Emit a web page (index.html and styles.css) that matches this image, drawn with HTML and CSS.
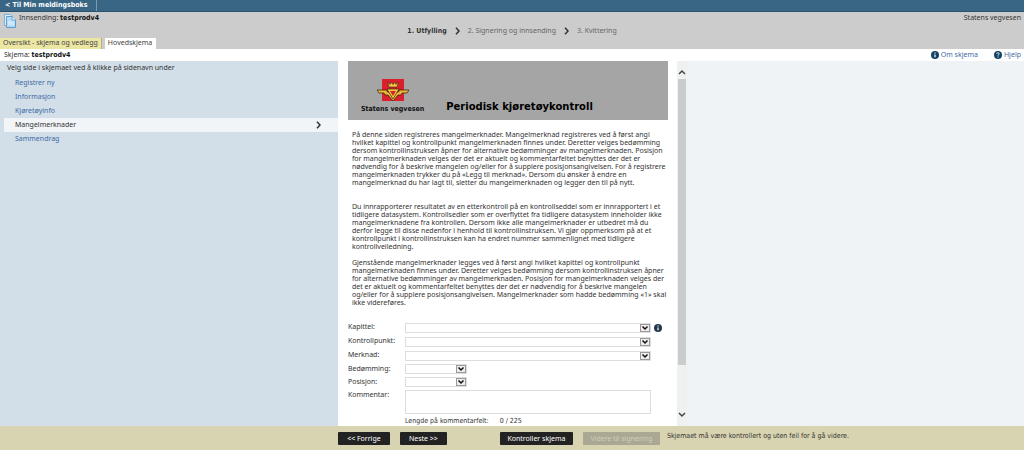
FILE: index.html
```html
<!DOCTYPE html>
<html lang="no">
<head>
<meta charset="utf-8">
<title>Periodisk kjøretøykontroll</title>
<link rel="stylesheet" href="styles.css">
</head>
<body>
<nav class="topbar"><a class="topbar-link" href="#">&lt; Til Min meldingsboks</a></nav>

<header class="header">
  <div class="header-left">
    <div class="submission">
      <svg class="doc-icon" viewBox="0 0 12 14" aria-hidden="true">
        <path d="M.5.5h6l3 3v8h-9z" fill="#dff0fb" stroke="#7fb0d6"/>
        <path d="M2.500 2.500h5.500l3.500 3.500v7.500h-9z" fill="#b5dbf5" stroke="#5f9ccb"/>
        <path d="M8 2.500v3.500h3.500" fill="#fff" stroke="#5f9ccb"/>
        <path d="M4 8h6M4 10h6" stroke="#e8f5fd"/>
      </svg>
      <span>Innsending: <strong>testprodv4</strong></span>
    </div>
    <div class="tabs">
      <a class="tab" href="#">Oversikt - skjema og vedlegg</a>
      <a class="tab tab-active" href="#">Hovedskjema</a>
    </div>
  </div>
  <ol class="steps">
    <li class="step-current">1. Utfylling</li>
    <li><svg class="chevron" viewBox="0 0 5 8" aria-hidden="true"><path d="M1 .7 4 4 1 7.300"/></svg>2. Signering og innsending</li>
    <li><svg class="chevron" viewBox="0 0 5 8" aria-hidden="true"><path d="M1 .7 4 4 1 7.300"/></svg>3. Kvittering</li>
  </ol>
  <div class="owner">Statens vegvesen</div>
</header>

<div class="formbar">
  <span>Skjema: <strong>testprodv4</strong></span>
  <div class="help-links">
    <a class="help-link" href="#"><svg class="round-icon" viewBox="0 0 8 8" aria-hidden="true"><circle cx="4" cy="4" r="4" fill="#134364"/><path d="M4 3.400v2.800M4 1.500v1" stroke="#fff" stroke-width="1.200"/></svg>Om skjema</a>
    <a class="help-link" href="#"><svg class="round-icon" viewBox="0 0 8 8" aria-hidden="true"><circle cx="4" cy="4" r="4" fill="#134364"/><path d="M2.700 3c0-1.800 2.700-1.600 2.500 0-.1.800-1.200.8-1.200 1.700M4 5.500v1" fill="none" stroke="#fff" stroke-width=".9"/></svg>Hjelp</a>
  </div>
</div>

<div class="workspace">
  <aside class="sidebar">
    <p class="sidebar-hint">Velg side i skjemaet ved å klikke på sidenavn under</p>
    <ul class="pages">
      <li><a class="page" href="#">Registrer ny</a></li>
      <li><a class="page" href="#">Informasjon</a></li>
      <li><a class="page" href="#">Kjøretøyinfo</a></li>
      <li><a class="page page-active" href="#">Mangelmerknader<svg class="chevron" viewBox="0 0 5 8" aria-hidden="true"><path d="M1 .7 4 4 1 7.300"/></svg></a></li>
      <li><a class="page" href="#">Sammendrag</a></li>
    </ul>
  </aside>

  <main class="form-pane">
    <div class="form-content">
      <div class="banner">
        <div class="brand">
          <svg class="brand-mark" viewBox="0 0 32 24" aria-hidden="true">
            <rect x="5" y="1" width="22" height="22" fill="#d9202c"/>
            <path d="M10.500 4l1.500 5h8l1.500-5-2.500 2.500L18 4l-2 2.500L14 4l-1 2.500z" fill="#f5c944" stroke="#3b2a10" stroke-width=".6"/>
            <path d="M0 12h9.500l1 2h11l1-2H32l-2 3h-5l-1 2h-3l-5 6-5-6H8l-1-2H2z" fill="#efb83a" stroke="#3b2a10" stroke-width=".8"/>
            <path d="M10 11h12l-6 10z" fill="#f5c944" stroke="#3b2a10" stroke-width=".7"/>
            <path d="M13 13h6l-3 5z" fill="#d9202c"/>
          </svg>
          <strong>Statens vegvesen</strong>
        </div>
        <h1 class="banner-title">Periodisk kjøretøykontroll</h1>
      </div>

      <div class="intro">
        <p class="intro-first">På denne siden registreres mangelmerknader. Mangelmerknad registreres ved å først angi<br>hvilket kapittel og kontrollpunkt mangelmerknaden finnes under. Deretter velges bedømming<br>dersom kontrollinstruksen åpner for alternative bedømminger av mangelmerknaden. Posisjon<br>for mangelmerknaden velges der det er aktuelt og kommentarfeltet benyttes der det er<br>nødvendig for å beskrive mangelen og/eller for å supplere posisjonsangivelsen. For å registrere<br>mangelmerknaden trykker du på «Legg til merknad». Dersom du ønsker å endre en<br>mangelmerknad du har lagt til, sletter du mangelmerknaden og legger den til på nytt.</p>
        <p>Du innrapporterer resultatet av en etterkontroll på en kontrollseddel som er innrapportert i et<br>tidligere datasystem. Kontrollsedler som er overflyttet fra tidligere datasystem inneholder ikke<br>mangelmerknadene fra kontrollen. Dersom ikke alle mangelmerknader er utbedret må du<br>derfor legge til disse nedenfor i henhold til kontrollinstruksen. Vi gjør oppmerksom på at et<br>kontrollpunkt i kontrollinstruksen kan ha endret nummer sammenlignet med tidligere<br>kontrollveiledning.</p>
        <p>Gjenstående mangelmerknader legges ved å først angi hvilket kapittel og kontrollpunkt<br>mangelmerknaden finnes under. Deretter velges bedømming dersom kontrollinstruksen åpner<br>for alternative bedømminger av mangelmerknaden. Posisjon for mangelmerknaden velges der<br>det er aktuelt og kommentarfeltet benyttes der det er nødvendig for å beskrive mangelen<br>og/eller for å supplere posisjonsangivelsen. Mangelmerknader som hadde bedømming «1» skal<br>ikke videreføres.</p>
      </div>

      <form class="fields">
        <label for="kapittel">Kapittel:</label>
        <div class="control control-wide"><select id="kapittel" class="select"><option></option></select><svg class="round-icon" viewBox="0 0 8 8" aria-hidden="true"><circle cx="4" cy="4" r="4" fill="#22384a"/><path d="M4 3.400v2.800M4 1.500v1" stroke="#fff" stroke-width="1.200"/></svg></div>
        <label for="kontrollpunkt">Kontrollpunkt:</label>
        <div class="control control-wide"><select id="kontrollpunkt" class="select"><option></option></select></div>
        <label for="merknad">Merknad:</label>
        <div class="control control-wide"><select id="merknad" class="select"><option></option></select></div>
        <label for="bedomming">Bedømming:</label>
        <div class="control"><select id="bedomming" class="select select-short"><option></option></select></div>
        <label for="posisjon">Posisjon:</label>
        <div class="control"><select id="posisjon" class="select select-short"><option></option></select></div>
        <label for="kommentar">Kommentar:</label>
        <div class="control"><textarea id="kommentar" class="comment"></textarea></div>
        <div class="counter"><span>Lengde på kommentarfelt:</span><span>0 / 225</span></div>
      </form>
    </div>
    <div class="scrollbar" aria-hidden="true">
      <svg class="scroll-arrow" viewBox="0 0 8 6"><path d="M1 5 4 2l3 3"/></svg>
      <div class="scroll-track"><div class="scroll-thumb"></div></div>
      <svg class="scroll-arrow" viewBox="0 0 8 6"><path d="M1 1l3 3 3-3"/></svg>
    </div>
  </main>
  <div class="side-space"></div>
</div>

<footer class="footer">
  <div class="actions">
    <button class="button" type="button">&lt;&lt; Forrige</button>
    <button class="button button-next" type="button">Neste &gt;&gt;</button>
    <button class="button button-check" type="button">Kontroller skjema</button>
    <button class="button button-sign" type="button" disabled>Videre til signering</button>
    <span class="notice">Skjemaet må være kontrollert og uten feil for å gå videre.</span>
  </div>
</footer>
</body>
</html>
```

FILE: styles.css
```css
* { box-sizing: border-box; }

body {
  margin: 0;
  height: 100vh;
  display: flex;
  flex-direction: column;
  overflow: hidden;
  font-family: "Noto Sans", "DejaVu Sans Condensed", sans-serif;
  font-size: 7px;
  line-height: 8px;
  color: #333;
  background: #fff;
}

a { color: #3f6ba5; text-decoration: none; }
p, ul, ol, h1 { margin: 0; padding: 0; }
ul, ol { list-style: none; }
svg { flex: none; }
strong { color: #111; }
select, textarea, button { font: inherit; margin: 0; }

strong, .topbar-link, .step-current, .counter, .notice {
  font-family: "DejaVu Sans Condensed", "DejaVu Sans", sans-serif;
}

.topbar {
  display: flex;
  flex: none;
  height: 12px;
  background: #3a6685;
  border-bottom: 1px solid #2d526c;
}
.topbar-link {
  padding: 1px 8px 0 5px;
  color: #fff;
  font-weight: bold;
  border-right: 1px solid #7d9bb0;
}

.header {
  display: grid;
  flex: none;
  grid-template-columns: 1fr auto 1fr;
  height: 37px;
  background: #ccc;
}
.header-left {
  display: flex;
  flex-direction: column;
  justify-content: space-between;
}
.submission { display: flex; gap: 3px; padding: 2px 0 0 4px; }
.doc-icon { width: 12px; height: 14px; }
.tabs { display: flex; gap: 3px; }
.tab {
  padding: 1px 3px 2px;
  color: #444;
  background: #ece6a3;
  border-right: 1px solid #b5b084;
}
.tab-active { background: #fff; border-color: #fff; }
.steps { display: flex; align-items: center; gap: 8px; color: #666; }
.steps li { display: flex; align-items: center; gap: 8px; }
.steps .step-current { font-weight: bold; color: #333; }
.chevron { width: 5px; height: 8px; }
.chevron path { fill: none; stroke: #333; stroke-width: 1.5; }
.owner { padding: 2px 3px 0 0; text-align: right; }

.formbar {
  display: flex;
  flex: none;
  justify-content: space-between;
  height: 12px;
  padding: 2px 3px 0 4px;
}
.help-links { display: flex; gap: 16px; }
.help-link { display: flex; gap: 2px; }
.round-icon { width: 8px; height: 8px; }

.workspace {
  flex: 1;
  min-height: 0;
  display: grid;
  grid-template-columns: 33% 349px 1fr;
}
.sidebar { background: #d2dfe8; }
.sidebar-hint { padding: 3px 7px 4px; }
.page {
  display: flex;
  justify-content: space-between;
  align-items: center;
  height: 14px;
  margin-left: 4px;
  padding: 0 17px 0 11px;
}
.page-active { color: #333; background: #f2f5f8; }

.form-pane { display: flex; justify-content: space-between; min-height: 0; }
.form-content { width: 330px; padding-left: 10px; overflow: hidden; }
.banner {
  display: flex;
  gap: 22px;
  align-items: flex-end;
  height: 59px;
  padding: 0 13px 7px;
  background: #a5a5a5;
}
.brand { display: flex; flex-direction: column; align-items: center; gap: 3px; }
.brand-mark { width: 32px; height: 24px; }
.banner-title {
  font-family: "DejaVu Sans", sans-serif;
  font-size: 10px;
  line-height: 12px;
  color: #000;
}
.intro { padding: 11px 0 0 4px; white-space: nowrap; }
.intro p { margin-bottom: 8px; }
.intro .intro-first { margin-bottom: 16px; }

.fields {
  display: grid;
  grid-template-columns: 57px 1fr;
  row-gap: 3px;
  padding-top: 7px;
}
.fields label { padding-top: 1px; }
.control { display: flex; align-items: center; gap: 3px; min-height: 10px; }
.control-wide { min-height: 11px; }
.select {
  appearance: none;
  width: 246px;
  height: 10px;
  padding: 0 12px 0 2px;
  border: 1px solid #ddd;
  border-radius: 0;
  background: #fff url("data:image/svg+xml,%3Csvg xmlns='http://www.w3.org/2000/svg' width='10' height='8'%3E%3Crect x='.5' y='.5' width='9' height='7' fill='%23eee' stroke='%23999'/%3E%3Cpath d='M2.500 2.500 5 5l2.500-2.500' fill='none' stroke='%23111' stroke-width='1.500'/%3E%3C/svg%3E") no-repeat right center;
}
.select-short { width: 62px; }
.comment {
  width: 246px;
  height: 24px;
  padding: 2px;
  border: 1px solid #ddd;
  resize: none;
}
.counter { grid-column: 2; display: flex; gap: 11px; }

.scrollbar {
  display: flex;
  flex-direction: column;
  align-items: center;
  width: 10px;
  padding: 8px 0;
  background: #eff1f1;
}
.scroll-arrow { width: 8px; height: 6px; }
.scroll-arrow path { fill: none; stroke: #444; stroke-width: 1.5; }
.scroll-track { flex: 1; width: 8px; padding-top: 4px; }
.scroll-thumb { height: 86%; background: #c9cccc; }
.side-space { background: #eff3f6; }

.footer {
  flex: none;
  height: 24px;
  padding: 6px 0 0 33%;
  background: #d8d3b0;
}
.actions { display: flex; align-items: flex-start; white-space: nowrap; }
.button {
  width: 52px;
  height: 13px;
  padding: 0;
  border: 0;
  border-radius: 1px;
  color: #fff;
  background: #222;
}
.button-next { width: 47px; margin-left: 10px; }
.button-check { width: 73px; margin-left: 53px; }
.button-sign { width: 77px; margin: 0 7px 0 10px; color: #d2cfb8; background: #aaa793; }
```
